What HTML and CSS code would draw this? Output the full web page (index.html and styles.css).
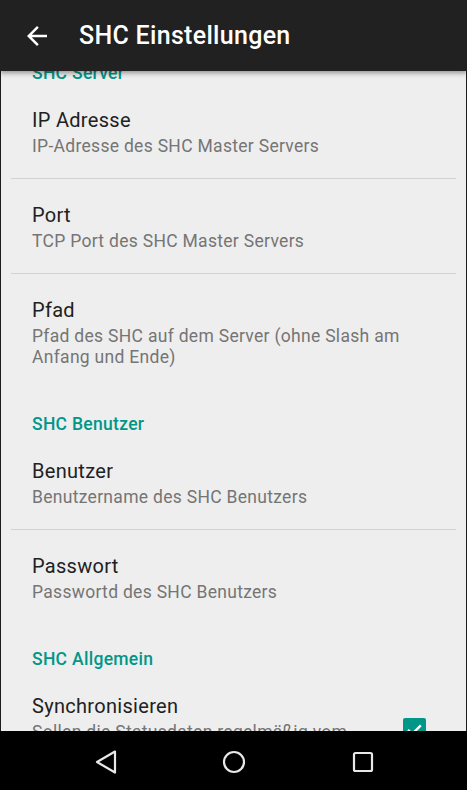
FILE: index.html
```html
<!DOCTYPE html>
<html lang="de">
<head>
<meta charset="utf-8">
<title>SHC Einstellungen</title>
<link rel="stylesheet" href="styles.css">
</head>
<body>
<div class="screen">
  <header class="toolbar">
    <svg class="back" width="30" height="30" viewBox="0 0 24 24"><path d="M20 11H7.83l5.59-5.59L12 4l-8 8 8 8 1.41-1.41L7.83 13H20v-2z" fill="#fff"/></svg>
    <h1 class="title">SHC Einstellungen</h1>
  </header>
  <main class="content">
    <div class="list">
      <div class="cat">SHC Server</div>
      <div class="pref">
        <div class="pref-text">
          <div class="pref-title">IP Adresse</div>
          <div class="pref-summary">IP-Adresse des SHC Master Servers</div>
        </div>
      </div>
      <div class="divider"></div>
      <div class="pref">
        <div class="pref-text">
          <div class="pref-title">Port</div>
          <div class="pref-summary">TCP Port des SHC Master Servers</div>
        </div>
      </div>
      <div class="divider"></div>
      <div class="pref">
        <div class="pref-text">
          <div class="pref-title">Pfad</div>
          <div class="pref-summary">Pfad des SHC auf dem Server (ohne Slash am Anfang und Ende)</div>
        </div>
      </div>
      <div class="cat">SHC Benutzer</div>
      <div class="pref">
        <div class="pref-text">
          <div class="pref-title">Benutzer</div>
          <div class="pref-summary">Benutzername des SHC Benutzers</div>
        </div>
      </div>
      <div class="divider"></div>
      <div class="pref">
        <div class="pref-text">
          <div class="pref-title">Passwort</div>
          <div class="pref-summary">Passwortd des SHC Benutzers</div>
        </div>
      </div>
      <div class="cat">SHC Allgemein</div>
      <div class="pref pref-check">
        <div class="pref-text">
          <div class="pref-title">Synchronisieren</div>
          <div class="pref-summary">Sollen die Statusdaten regelmäßig vom Server abgerufen werden</div>
        </div>
        <div class="checkbox">
          <svg width="23" height="23" viewBox="0 0 23 23"><path d="M5 11.8l4.2 4.2 8.6-8.6" fill="none" stroke="#fff" stroke-width="2.4"/></svg>
        </div>
      </div>
    </div>
  </main>
  <nav class="navbar">
    <div class="nav-slot">
      <svg width="26" height="26" viewBox="0 0 26 26"><path d="M23 2.5 L5 13 L23 23.5 Z" fill="none" stroke="#e8e8e8" stroke-width="2.2" stroke-linejoin="round"/></svg>
    </div>
    <div class="nav-slot">
      <svg width="26" height="26" viewBox="0 0 26 26"><circle cx="13" cy="13" r="10" fill="none" stroke="#e8e8e8" stroke-width="2.2"/></svg>
    </div>
    <div class="nav-slot">
      <svg width="26" height="26" viewBox="0 0 26 26"><rect x="4" y="4" width="18" height="18" rx="1.5" fill="none" stroke="#e8e8e8" stroke-width="2.2"/></svg>
    </div>
  </nav>
</div>
</body>
</html>
```

FILE: styles.css
```css
* { box-sizing: border-box; }
html, body { margin: 0; padding: 0; background: #000; }
body { font-family: Roboto, "Noto Sans", sans-serif; letter-spacing: 0.3px; }

.screen {
  width: 467px;
  height: 790px;
  display: flex;
  flex-direction: column;
  overflow: hidden;
}

.toolbar {
  height: 71px;
  flex: none;
  background: #212121;
  display: flex;
  align-items: center;
  position: relative;
  z-index: 2;
  box-shadow: 0 2px 5px rgba(0,0,0,0.4);
}
.back { margin-left: 22px; flex: none; }
.title {
  margin: 0 0 0 27px;
  font-size: 25px;
  line-height: 30px;
  font-weight: 500;
  color: #fff;
}

.content {
  flex: 1;
  overflow: hidden;
  background: #eeeeee;
  border-left: 1px solid #1c1c1c;
  border-right: 1px solid #1c1c1c;
}
.list { margin-top: -33px; }

.cat {
  padding: 24px 20px 0 31px;
  font-size: 17.5px;
  line-height: 22px;
  font-weight: 500;
  color: #009688;
}

.pref {
  padding: 24px 20px 21px 31px;
}
.pref-title {
  font-size: 20px;
  line-height: 24px;
  color: #212121;
}
.pref-summary {
  margin-top: 4px;
  font-size: 17.5px;
  line-height: 21px;
  color: #757575;
}
.divider {
  height: 1px;
  margin: 0 10px;
  background: #d2d2d2;
}

.pref-check {
  display: flex;
  align-items: center;
}
.pref-check .pref-text { flex: 1; padding-right: 50px; }
.checkbox {
  width: 23px;
  height: 23px;
  border-radius: 2px;
  background: #009688;
  margin-right: 20px;
  flex: none;
}
.checkbox svg { display: block; }

.navbar {
  height: 59px;
  flex: none;
  background: #000;
  display: flex;
  justify-content: center;
  align-items: center;
  padding-top: 3px;
}
.nav-slot {
  width: 129px;
  display: flex;
  justify-content: center;
}
.nav-slot svg { display: block; }
```
